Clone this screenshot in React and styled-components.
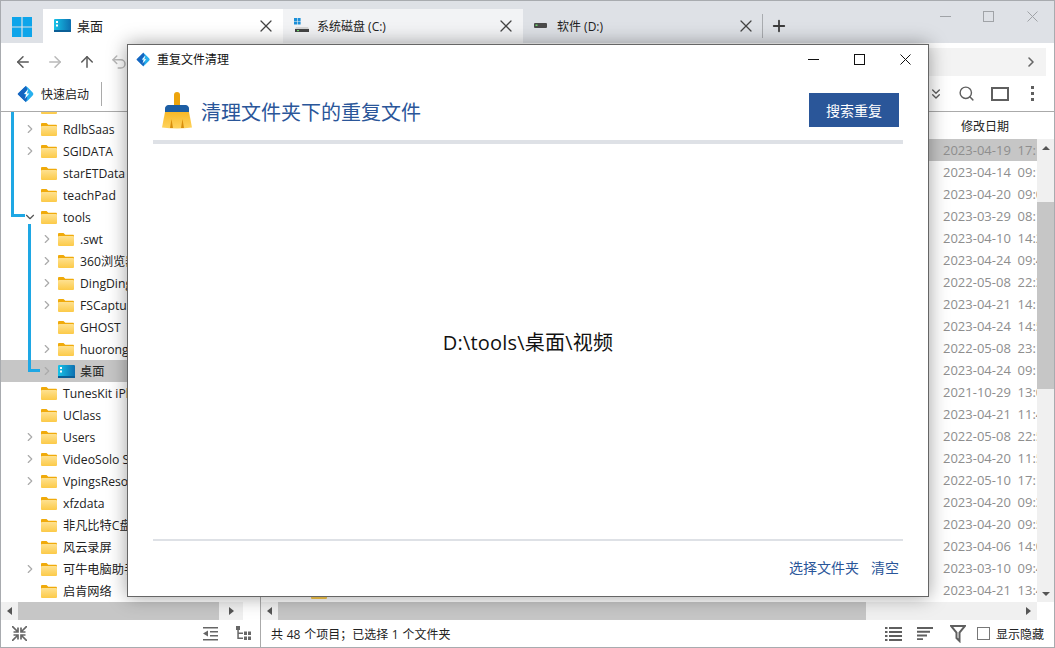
import React from 'react';
import styled, { createGlobalStyle } from 'styled-components';
import { ArrowLeft, ArrowRight, ArrowUp, Undo2, ChevronRight, ChevronDown, ChevronsDown, Search, Plus, X } from 'lucide-react';

const FONT = `"Open Sans", "Noto Sans CJK SC", sans-serif`;

const GlobalStyle = createGlobalStyle`
  html, body { margin: 0; padding: 0; background: #fff; }
  body { font-family: ${FONT}; overflow: hidden; }
  * { box-sizing: border-box; }
`;

const Frame = styled.div`
  position: relative;
  width: 1055px;
  height: 648px;
  border: 1px solid #a8abaf;
  display: flex;
  flex-direction: column;
  background: #fff;
  overflow: hidden;
`;

/* title bar + tabs */
const TitleBar = styled.div`
  height: 42px;
  flex: none;
  background: #dee1e6;
  display: flex;
  align-items: flex-end;
`;
const StartButton = styled.div`
  width: 42px;
  height: 42px;
  display: flex;
  align-items: center;
  justify-content: center;
  padding-top: 10px;
  padding-right: 1px;
`;
const Tab = styled.div`
  width: 240px;
  height: 34px;
  display: flex;
  align-items: center;
  padding: 0 7px 1px 11px;
  background: ${p => p.$active ? '#fff' : p.$light ? '#f2f3f5' : 'transparent'};
  color: #222;
  font-size: ${p => p.$active ? 13 : 12}px;
`;
const TabIcon = styled.span`
  width: 18px;
  height: 18px;
  flex: none;
  display: flex;
  align-items: center;
`;
const TabLabel = styled.span`
  flex: 1;
  margin-left: 5px;
`;
const TabSep = styled.div`
  width: 1px;
  height: 24px;
  background: #a9acb0;
  align-self: center;
  margin-top: 8px;
  margin-left: -1px;
`;
const NewTab = styled.div`
  width: 32px;
  height: 34px;
  display: flex;
  align-items: center;
  justify-content: center;
  color: #3c3c3c;
`;
const WindowButtons = styled.div`
  margin-left: auto;
  align-self: flex-start;
  display: flex;
  height: 31px;
`;
const WindowButton = styled.div`
  width: 43.500px;
  display: flex;
  align-items: center;
  justify-content: center;
`;

/* toolbar */
const Toolbar = styled.div`
  flex: none;
  height: 69px;
  border-bottom: 1px solid #aaa;
  display: flex;
  flex-direction: column;
  background: #fff;
`;
const NavRow = styled.div`
  height: 33px;
  display: flex;
  align-items: center;
  padding: 4px 8px 0 6px;
`;
const NavButton = styled.div`
  width: 32px;
  display: flex;
  justify-content: center;
  color: ${p => p.$off ? '#b9b9b9' : '#5a5a5a'};
`;
const AddressBar = styled.div`
  flex: 1;
  height: 28px;
  margin-left: 12px;
  background: #f3f3f3;
  display: flex;
  align-items: center;
  justify-content: flex-end;
  padding-right: 7px;
  color: #666;
`;
const ActionRow = styled.div`
  flex: 1;
  display: flex;
  align-items: center;
  padding: 0 15px 0 16px;
`;
const QuickStart = styled.div`
  display: flex;
  align-items: center;
  gap: 6px;
  font-size: 12px;
  color: #222;
  padding-right: 12px;
  height: 24px;
  border-right: 1px solid #aaa;
`;
const ActionIcons = styled.div`
  margin-left: auto;
  display: flex;
  align-items: center;
  gap: 14px;
  color: #5f5f5f;
`;
const ViewBox = styled.div`
  width: 18px;
  height: 14px;
  margin: 0 -2px 0 2px;
  border: 2px solid #5f5f5f;
`;
const Dots = styled.div`
  width: 3px;
  height: 3px;
  margin: 0 5px 0 10px;
  background: #5f5f5f;
  box-shadow: 0 -6px 0 #5f5f5f, 0 6px 0 #5f5f5f;
`;

/* panes */
const Panes = styled.div`
  flex: 1;
  min-height: 0;
  display: flex;
`;
const TreePane = styled.div`
  position: relative;
  width: 260px;
  flex: none;
  display: flex;
  flex-direction: column;
  border-right: 1px solid #aaa;
`;
const TreeScroll = styled.div`
  position: relative;
  flex: 1;
  min-height: 0;
  overflow: hidden;
`;
const TreeList = styled.div`
  margin-top: -16px;
`;
const TreeRow = styled.div`
  height: 22px;
  display: flex;
  align-items: center;
  padding-left: ${p => p.$depth * 17 + 22}px;
  background: ${p => p.$selected ? '#c6c6c6' : 'transparent'};
  font-size: 12.2px;
  color: #222;
  white-space: nowrap;
`;
const Expander = styled.span`
  width: 14px;
  flex: none;
  display: flex;
  justify-content: center;
  margin-right: 4px;
  color: ${p => p.$open ? '#555' : '#aaa'};
`;
const RowLabel = styled.span`
  margin-left: ${p => p.$gap}px;
`;
const GuideLine = styled.div`
  position: absolute;
  left: ${p => p.$x}px;
  top: ${p => p.$top}px;
  width: ${p => p.$w}px;
  height: ${p => p.$h}px;
  border-left: 3px solid #1ea7e4;
  border-bottom: 3px solid #1ea7e4;
`;
const HScroll = styled.div`
  height: 18px;
  flex: none;
  display: flex;
  background: ${p => p.$track || '#fff'};
`;
const ScrollButton = styled.div`
  width: ${p => p.$w || 17}px;
  flex: none;
  display: flex;
  align-items: center;
  justify-content: center;
  background: ${p => p.$bg || '#f0f0f0'};
`;
const ScrollThumb = styled.div`
  width: ${p => p.$w}px;
  flex: none;
  background: #c6c6c6;
`;
const ArrowLeftTri = styled.div`
  border: 4px solid transparent;
  border-left: 0;
  border-right: 5px solid #555;
`;
const ArrowRightTri = styled.div`
  border: 4px solid transparent;
  border-right: 0;
  border-left: 5px solid #555;
`;
const ArrowUpTri = styled.div`
  border: 4px solid transparent;
  border-top: 0;
  border-bottom: 4px solid #555;
`;
const ArrowDownTri = styled.div`
  border: 4px solid transparent;
  border-bottom: 0;
  border-top: 4px solid #555;
`;

const ListPane = styled.div`
  flex: 1;
  min-width: 0;
  display: flex;
  flex-direction: column;
`;
const ListHead = styled.div`
  height: 27px;
  flex: none;
  display: flex;
  align-items: center;
  padding-left: 700px;
  font-size: 12px;
  color: #222;
`;
const ListBody = styled.div`
  flex: 1;
  min-height: 0;
  display: flex;
`;
const Rows = styled.div`
  flex: 1;
  min-width: 0;
  overflow: hidden;
`;
const DateRow = styled.div`
  height: 22px;
  display: flex;
  align-items: center;
  background: ${p => p.$selected ? '#c6c6c6' : 'transparent'};
  color: #8e8e8e;
  font-size: 13px;
  white-space: pre;
  overflow: hidden;
`;
const NameCell = styled.div`
  width: 682px;
  flex: none;
  padding-left: 50px;
  display: flex;
  align-items: center;
`;
const VScroll = styled.div`
  width: 17px;
  flex: none;
  display: flex;
  flex-direction: column;
  background: #f0f0f0;
`;
const VButton = styled.div`
  height: 17px;
  flex: none;
  display: flex;
  align-items: center;
  justify-content: center;
`;
const VThumb = styled.div`
  height: 187px;
  margin-top: 46px;
  background: #c6c6c6;
`;

/* status bar */
const StatusRow = styled.div`
  flex: none;
  height: 27px;
  display: flex;
`;
const TreeStatus = styled.div`
  width: 260px;
  flex: none;
  border-right: 1px solid #aaa;
  display: flex;
  align-items: center;
  padding: 0 9px 0 11px;
`;
const OutdentSlot = styled.div`
  margin-left: auto;
  margin-right: 18px;
  display: flex;
`;
const Filler = styled.div`
  flex: 1;
`;
const StatusMain = styled.div`
  flex: 1;
  display: flex;
  align-items: center;
  padding: 0 10px;
  font-size: 12px;
  word-spacing: 0.6px;
  color: #222;
`;
const StatusTools = styled.div`
  margin-left: auto;
  display: flex;
  align-items: center;
  gap: 15px;
`;
const FilterSlot = styled.div`
  display: flex;
  margin-left: 2px;
`;
const ShowHidden = styled.label`
  display: flex;
  align-items: center;
  gap: 6px;
  margin-left: -4px;
`;
const CheckBox = styled.span`
  width: 13px;
  height: 13px;
  border: 1px solid #777;
`;

/* dialog over the explorer */
const Dialog = styled.div`
  position: absolute;
  left: 126px;
  top: 43px;
  width: 802px;
  height: 553px;
  background: #fff;
  border: 1px solid #666;
  box-shadow: 0 0 18px rgba(0, 0, 0, 0.38);
  display: flex;
  flex-direction: column;
`;
const DialogTitle = styled.div`
  height: 30px;
  flex: none;
  display: flex;
  align-items: center;
  padding: 0 0 2px 8px;
  font-size: 12px;
  color: #111;
  gap: 6px;
`;
const DialogButtons = styled.div`
  margin-left: auto;
  display: flex;
`;
const DialogButton = styled.div`
  width: 46px;
  display: flex;
  justify-content: center;
`;
const DialogInner = styled.div`
  flex: 1;
  min-height: 0;
  padding: 0 25px;
  display: flex;
  flex-direction: column;
`;
const DialogHead = styled.div`
  height: 69px;
  flex: none;
  display: flex;
  align-items: center;
  padding: 5px 4px 0 9px;
  border-bottom: 4px solid #dee1e6;
`;
const Heading = styled.h1`
  margin: 2px 0 0 9px;
  font-size: 20px;
  font-weight: 400;
  color: #2a5699;
`;
const SearchButton = styled.button`
  margin-left: auto;
  width: 90px;
  height: 34px;
  border: 0;
  background: #2a5699;
  color: #fff;
  font-family: inherit;
  font-size: 14px;
  padding: 0;
`;
const DialogBody = styled.div`
  flex: 1;
  display: flex;
  align-items: center;
  justify-content: center;
  font-size: 20px;
  letter-spacing: 0.2px;
  color: #111;
  border-bottom: 2px solid #dee1e6;
`;
const DialogFoot = styled.div`
  height: 55px;
  flex: none;
  display: flex;
  align-items: center;
  justify-content: flex-end;
  gap: 12px;
  padding: 0 4px 3px 0;
`;
const FootLink = styled.a`
  font-size: 14px;
  color: #2a5699;
`;

const StartIcon = () => (
  <svg width="20" height="20" viewBox="0 0 20 20">
    <path fill="#0ea5ea" d="M0 0h9.4v9.4H0zM10.600 0H20v9.4h-9.4zM0 10.600h9.4V20H0zM10.600 10.600H20V20h-9.4z" />
  </svg>
);

const FolderIcon = ({ w = 16, h = 13 }) => (
  <svg width={w} height={h} viewBox="0 0 16 13" preserveAspectRatio="none">
    <defs>
      <linearGradient id="folderBody" x1="0" y1="0" x2="0" y2="1">
        <stop offset="0" stopColor="#fee190" />
        <stop offset="1" stopColor="#fcca48" />
      </linearGradient>
    </defs>
    <path fill="#f0aa0a" d="M0 1.200C0 .5.500 0 1.200 0h4.300l1.800 1.800h7.500c.7 0 1.200.5 1.200 1.200V5H0z" />
    <rect y="3" width="16" height="10" rx="1" fill="url(#folderBody)" />
  </svg>
);

const DesktopIcon = () => (
  <svg width="17" height="13" viewBox="0 0 17 13">
    <defs>
      <linearGradient id="desk" x1="0" y1="0" x2="1" y2="0">
        <stop offset="0" stopColor="#17c3e8" />
        <stop offset="1" stopColor="#0d6fb0" />
      </linearGradient>
    </defs>
    <rect width="17" height="13" rx="1" fill="url(#desk)" />
    <path fill="#fff" d="M2 2h2v2H2zM2 5.500h2v2H2z" />
    <rect y="11" width="17" height="2" fill="#0b5f96" />
  </svg>
);

const SystemDriveIcon = () => (
  <svg width="16" height="15" viewBox="0 0 16 15">
    <path fill="#1b8fd8" d="M0 0h3v3H0zM3.600 0h3v3h-3zM0 3.600h3v3H0zM3.600 3.600h3v3h-3z" />
    <path fill="#d6d6d6" d="M2 9h12l1 2H1z" />
    <rect x="1" y="11" width="14" height="3" fill="#444" />
    <rect x="3" y="12" width="2" height="1.200" fill="#6fdc6f" />
  </svg>
);

const DriveIcon = () => (
  <svg width="13" height="5" viewBox="0 0 13 5">
    <rect width="13" height="5" rx="1" fill="#4a4a4a" />
    <rect x="1.500" y="1.500" width="2" height="1.500" fill="#6fdc6f" />
  </svg>
);

const LogoIcon = ({ size }) => (
  <svg width={size} height={size} viewBox="0 0 20 20">
    <rect x="3.500" y="3.500" width="13" height="13" rx="2.500" transform="rotate(45 10 10)" fill="#27b0ee" />
    <path fill="#1565c0" d="M10 .8 1.800 8.600c-1.400 1.400-1.400 1.400 0 2.800L10 19.200l1.500-5L8 10l3.500-5z" />
    <path fill="#fff" d="M12.500 4.500 7.800 10h2.700l-2 5.500 5.200-6h-2.700z" />
  </svg>
);

const BroomIcon = () => (
  <svg width="30" height="37" viewBox="0 0 30 37">
    <defs>
      <linearGradient id="bristle" x1="0" y1="0" x2="0" y2="1">
        <stop offset="0" stopColor="#f8b827" />
        <stop offset="1" stopColor="#ffd45e" />
      </linearGradient>
    </defs>
    <path fill="#eda40c" d="M12 3a3 3 0 0 1 6 0v11h-6z" />
    <path fill="#1d5ea4" d="M3 20v-3.500Q3 14 6 13h18q3 1 3 3.500V20z" />
    <path fill="url(#bristle)" d="M3 20h24l3 15.500q-15 2-30 0z" />
    <path fill="#d98f0c" d="M8 36l1.500-9 1.500 9zM19 36l1.500-9 1.500 9z" />
  </svg>
);

const CaptionMin = ({ color }) => (
  <svg width="11" height="11" viewBox="0 0 11 11" shapeRendering="crispEdges">
    <path stroke={color} d="M0 5.500h11" />
  </svg>
);
const CaptionMax = ({ color }) => (
  <svg width="11" height="11" viewBox="0 0 11 11" shapeRendering="crispEdges" fill="none">
    <rect x=".5" y=".5" width="10" height="10" stroke={color} />
  </svg>
);
const CaptionClose = ({ color }) => (
  <svg width="11" height="11" viewBox="0 0 11 11" fill="none">
    <path stroke={color} d="M.5.500l10 10M10.500.500l-10 10" />
  </svg>
);

const CollapseIcon = () => (
  <svg width="15" height="15" viewBox="0 0 15 15" fill="none" stroke="#666" strokeWidth="1.700">
    <path d="M0 0l5.500 5.500M6 1.500V6H1.500M15 0L9.500 5.500M9 1.500V6h4.500M0 15l5.500-5.500M6 13.500V9H1.500M15 15L9.500 9.500M9 13.500V9h4.500" />
  </svg>
);

const OutdentIcon = () => (
  <svg width="15" height="14" viewBox="0 0 15 14" fill="#666">
    <path d="M0 0h15v1.500H0zM7 4h8v1.500H7zM7 8h8v1.500H7zM0 12h15v1.500H0zM5 3.500v6L0 6.500z" />
  </svg>
);

const TreeViewIcon = () => (
  <svg width="15" height="15" viewBox="0 0 15 15" fill="#666">
    <path d="M0 0h4v4H0zM1.300 4h1.500v9H1.300zM1.300 6.500H7V8H1.300zM1.300 11.500H7V13H1.300zM8 5.500h3V9H8zM12 5.500h3V9h-3zM8 10.500h3V14H8zM12 10.500h3V14h-3z" />
  </svg>
);

const ListIcon = () => (
  <svg width="17" height="14" viewBox="0 0 17 14" fill="#5f5f5f">
    <path d="M0 0h2.500v2H0zM4 0h13v2H4zM0 4h2.500v2H0zM4 4h13v2H4zM0 8h2.500v2H0zM4 8h13v2H4zM0 12h2.500v2H0zM4 12h13v2H4z" />
  </svg>
);

const SortIcon = () => (
  <svg width="16" height="13" viewBox="0 0 16 13" fill="#5f5f5f">
    <path d="M0 0h16v2H0zM0 3.800h13v2H0zM0 7.600h10v2H0zM0 11.300h6v2H0z" />
  </svg>
);

const FilterIcon = () => (
  <svg width="16" height="18" viewBox="0 0 16 18" fill="none" stroke="#5f5f5f" strokeWidth="2">
    <path d="M1 1h14L9.500 7.500V16l-3-3V7.500z" />
  </svg>
);

const tree = [
  { name: '', depth: 0 },
  { name: 'RdlbSaas', depth: 0, more: true },
  { name: 'SGIDATA', depth: 0, more: true },
  { name: 'starETData', depth: 0 },
  { name: 'teachPad', depth: 0 },
  { name: 'tools', depth: 0, open: true },
  { name: '.swt', depth: 1, more: true },
  { name: '360浏览器', depth: 1, more: true },
  { name: 'DingDing', depth: 1, more: true },
  { name: 'FSCapture', depth: 1, more: true },
  { name: 'GHOST', depth: 1 },
  { name: 'huorong', depth: 1, more: true },
  { name: '桌面', depth: 1, more: true, selected: true },
  { name: 'TunesKit iPhone', depth: 0 },
  { name: 'UClass', depth: 0 },
  { name: 'Users', depth: 0, more: true },
  { name: 'VideoSolo Studio', depth: 0, more: true },
  { name: 'VpingsResource', depth: 0, more: true },
  { name: 'xfzdata', depth: 0 },
  { name: '非凡比特C盘', depth: 0 },
  { name: '风云录屏', depth: 0 },
  { name: '可牛电脑助手', depth: 0, more: true },
  { name: '启肯网络', depth: 0 },
];

const dates = [
  '2023-04-19  17:1', '2023-04-14  09:1', '2023-04-20  09:0', '2023-03-29  08:1',
  '2023-04-10  14:2', '2023-04-24  09:4', '2022-05-08  22:3', '2023-04-21  14:1',
  '2023-04-24  14:5', '2022-05-08  23:1', '2023-04-24  09:1', '2021-10-29  13:0',
  '2023-04-21  11:4', '2022-05-08  22:5', '2023-04-20  11:5', '2022-05-10  17:1',
  '2023-04-20  09:3', '2023-04-20  09:5', '2023-04-06  14:0', '2023-03-10  09:4',
  '2023-04-21  13:4',
];

const App = () => (
  <Frame>
    <GlobalStyle />
    <TitleBar>
      <StartButton><StartIcon /></StartButton>
      <Tab $active>
        <TabIcon><DesktopIcon /></TabIcon>
        <TabLabel>桌面</TabLabel>
        <X size={20} strokeWidth={1.5} color="#444" />
      </Tab>
      <Tab $light>
        <TabIcon><SystemDriveIcon /></TabIcon>
        <TabLabel>系统磁盘 (C:)</TabLabel>
        <X size={20} strokeWidth={1.5} color="#444" />
      </Tab>
      <Tab>
        <TabIcon><DriveIcon /></TabIcon>
        <TabLabel>软件 (D:)</TabLabel>
        <X size={20} strokeWidth={1.5} color="#444" />
      </Tab>
      <TabSep />
      <NewTab><Plus size={18} strokeWidth={2.400} /></NewTab>
      <WindowButtons>
        <WindowButton><CaptionMin color="#a0a3a7" /></WindowButton>
        <WindowButton><CaptionMax color="#a0a3a7" /></WindowButton>
        <WindowButton><CaptionClose color="#a0a3a7" /></WindowButton>
      </WindowButtons>
    </TitleBar>

    <Toolbar>
      <NavRow>
        <NavButton><ArrowLeft size={18} /></NavButton>
        <NavButton $off><ArrowRight size={18} /></NavButton>
        <NavButton><ArrowUp size={18} /></NavButton>
        <NavButton $off><Undo2 size={18} /></NavButton>
        <AddressBar><ChevronRight size={16} strokeWidth={2.400} /></AddressBar>
      </NavRow>
      <ActionRow>
        <QuickStart><LogoIcon size={18} />快速启动</QuickStart>
        <ActionIcons>
          <ChevronsDown size={16} />
          <Search size={17} />
          <ViewBox />
          <Dots />
        </ActionIcons>
      </ActionRow>
    </Toolbar>

    <Panes>
      <TreePane>
        <TreeScroll>
          <TreeList>
            {tree.map((item, i) => (
              <TreeRow key={i} $depth={item.depth} $selected={item.selected}>
                <Expander $open={item.open}>
                  {item.more && <ChevronRight size={14} />}
                  {item.open && <ChevronDown size={14} />}
                </Expander>
                {item.selected ? <DesktopIcon /> : <FolderIcon />}
                <RowLabel $gap={item.selected ? 5 : 6}>{item.name}</RowLabel>
              </TreeRow>
            ))}
          </TreeList>
          <GuideLine $x={10} $top={0} $w={14} $h={105} />
          <GuideLine $x={27} $top={112} $w={12} $h={148} />
        </TreeScroll>
        <HScroll>
          <ScrollButton><ArrowLeftTri /></ScrollButton>
          <ScrollThumb $w={201} />
          <ScrollButton $w={24}><ArrowRightTri /></ScrollButton>
        </HScroll>
      </TreePane>
      <ListPane>
        <ListHead>修改日期</ListHead>
        <ListBody>
          <Rows>
            {dates.map((d, i) => (
              <DateRow key={d + i} $selected={i === 0}>
                <NameCell>{i === dates.length - 1 && <FolderIcon w={16} h={17} />}</NameCell>
                {d}
              </DateRow>
            ))}
          </Rows>
          <VScroll>
            <VButton><ArrowUpTri /></VButton>
            <VThumb />
            <Filler />
            <VButton><ArrowDownTri /></VButton>
          </VScroll>
        </ListBody>
        <HScroll $track="#f0f0f0">
          <ScrollButton><ArrowLeftTri /></ScrollButton>
          <ScrollThumb $w={588} />
          <Filler />
          <ScrollButton><ArrowRightTri /></ScrollButton>
          <ScrollButton $bg="#fff" />
        </HScroll>
      </ListPane>
    </Panes>

    <StatusRow>
      <TreeStatus>
        <CollapseIcon />
        <OutdentSlot><OutdentIcon /></OutdentSlot>
        <TreeViewIcon />
      </TreeStatus>
      <StatusMain>
        共 48 个项目；已选择 1 个文件夹
        <StatusTools>
          <ListIcon />
          <SortIcon />
          <FilterSlot><FilterIcon /></FilterSlot>
          <ShowHidden><CheckBox />显示隐藏</ShowHidden>
        </StatusTools>
      </StatusMain>
    </StatusRow>

    <Dialog>
      <DialogTitle>
        <LogoIcon size={15} />
        重复文件清理
        <DialogButtons>
          <DialogButton><CaptionMin color="#111" /></DialogButton>
          <DialogButton><CaptionMax color="#111" /></DialogButton>
          <DialogButton><CaptionClose color="#111" /></DialogButton>
        </DialogButtons>
      </DialogTitle>
      <DialogInner>
        <DialogHead>
          <BroomIcon />
          <Heading>清理文件夹下的重复文件</Heading>
          <SearchButton>搜索重复</SearchButton>
        </DialogHead>
        <DialogBody>D:\tools\桌面\视频</DialogBody>
        <DialogFoot>
          <FootLink>选择文件夹</FootLink>
          <FootLink>清空</FootLink>
        </DialogFoot>
      </DialogInner>
    </Dialog>
  </Frame>
);

export default App;
